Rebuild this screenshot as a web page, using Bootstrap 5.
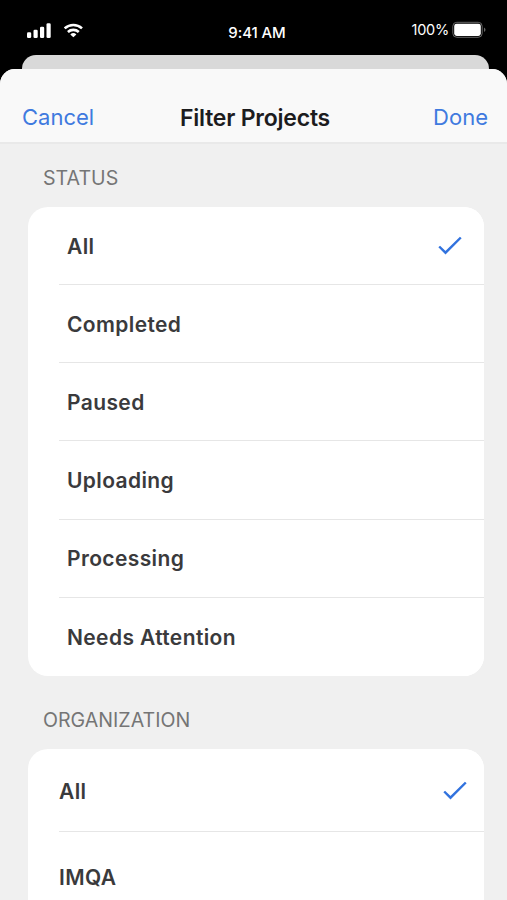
<!DOCTYPE html>
<html lang="en">
<head>
<meta charset="utf-8">
<meta name="viewport" content="width=device-width, initial-scale=1">
<title>Filter Projects</title>
<link href="https://cdn.jsdelivr.net/npm/bootstrap@5.3.0/dist/css/bootstrap.min.css" rel="stylesheet">
<style>
  body { font-family: Inter, "Liberation Sans", sans-serif; background: #000; height: 900px; line-height: 1; }
  .phone { width: 507px; height: 900px; background: #000; }
  .status-bar { height: 55px; font-size: 15px; flex: none; padding: 0 21px 0 26px; }
  .status-side { width: 180px; }
  .status-left { padding-top: 5px; gap: 12px; width: 182px; }
  .clock { font-weight: 500; letter-spacing: -.1px; padding-top: 9px; }
  .charge { padding-top: 4px; gap: 3px; font-size: 14.5px; }
  .charge span { letter-spacing: -.25px; padding-top: 2px; }
  .back-sheet { height: 14px; margin: 0 18px 0 22px; background: #d9d9d9; border-radius: 14px 14px 0 0; flex: none; }
  .sheet { background: #f0f0f0; border-radius: 15px 15px 0 0; }
  .sheet-head { height: 75px; background: #f9f9f9; border-bottom: 2px solid #e9e9e9; padding: 23px 19px 0 22px; font-size: 22px; flex: none; }
  .head-btn { color: #3f7adf; font-size: 22px; line-height: 1; background: none; width: 76px; }
  .sheet-title { font-size: 23px; font-weight: 600; color: #1c1c1e; margin: 0; letter-spacing: -.22px; padding-top: 3px; }
  .section-label { font-size: 19.6px; color: #757575; font-weight: 400; margin: 0; padding-left: 43px; flex: none; }
  .label-status { height: 63px; padding-top: 6px; }
  .label-org { height: 73px; padding-top: 16px; }
  .options { margin: 0 23px 0 28px; border-radius: 20px; background: #fff; overflow: hidden; flex: none; --bs-list-group-bg: #fff; }
  .options .option { height: 78.17px; margin-left: 31px; padding: 1.3px 22px 0 8px; border: 0; border-bottom: 1.5px solid #e6e6e6; font-size: 21px; font-weight: 600; color: #3a3a3c; letter-spacing: .38px; border-radius: 0; }
  .options .option:last-child { border-bottom: 0; }
  .options-org { height: 200px; }
  .options-org .option { height: 83.5px; padding: 2px 17px 0 0; }
  .options-org .option:last-child { height: 88px; }
</style>
<script src="https://cdn.jsdelivr.net/npm/bootstrap@5.3.0/dist/js/bootstrap.bundle.min.js"></script>
</head>
<body class="m-0 overflow-hidden">
<div class="phone d-flex flex-column overflow-hidden">
  <div class="status-bar d-flex justify-content-between align-items-center text-white">
    <div class="status-side status-left d-flex align-items-center">
      <svg width="26" height="17" viewBox="0 0 26 17" fill="#fff">
        <rect x="1" y="10.3" width="4.2" height="5.7" rx="1.3"/>
        <rect x="7.5" y="7.8" width="4.2" height="8.2" rx="1.3"/>
        <rect x="14" y="4.8" width="4.2" height="11.2" rx="1.3"/>
        <rect x="20.5" y="1.2" width="4.2" height="14.8" rx="1.3"/>
      </svg>
      <svg width="20" height="17" viewBox="0 0 20 17" fill="none" stroke="#fff" stroke-width="2.6">
        <path d="M.7 6.4a12.9 12.9 0 0 1 17.3 0"/>
        <path d="M3.9 10a8 8 0 0 1 10.9 0"/>
        <path d="M9.35 15.2L6.3 12.5a4.4 4.4 0 0 1 6.1 0z" fill="#fff" stroke="none"/>
      </svg>
    </div>
    <div class="clock">9:41 AM</div>
    <div class="status-side d-flex align-items-center justify-content-end charge">
      <span>100%</span>
      <svg width="34" height="18" viewBox="0 0 34 18"><rect x=".8" y="1.3" width="29.4" height="15" rx="4" fill="none" stroke="#666"/><rect x="2.2" y="2.7" width="26.6" height="12.2" rx="2.4" fill="#fff"/><path d="M32 6.5v4.5q1.5-.6 1.5-2.2T32 6.5" fill="#666"/></svg>
    </div>
  </div>
  <div class="back-sheet"></div>
  <main class="sheet d-flex flex-column flex-grow-1 overflow-hidden">
    <header class="sheet-head d-flex justify-content-between align-items-center">
      <button class="head-btn border-0 p-0 text-start" type="button">Cancel</button>
      <h1 class="sheet-title">Filter Projects</h1>
      <button class="head-btn border-0 p-0 text-end" type="button">Done</button>
    </header>
    <h2 class="section-label label-status d-flex align-items-center">STATUS</h2>
    <ul class="options list-group">
      <li class="option list-group-item d-flex align-items-center justify-content-between">All
        <svg width="24" height="20" viewBox="0 0 24 20" fill="none" stroke="#3172de" stroke-width="2.4"><path d="M1.2 10.5l6.3 6.2L22.8 1.5"/></svg></li>
      <li class="option list-group-item d-flex align-items-center">Completed</li>
      <li class="option list-group-item d-flex align-items-center">Paused</li>
      <li class="option list-group-item d-flex align-items-center">Uploading</li>
      <li class="option list-group-item d-flex align-items-center">Processing</li>
      <li class="option list-group-item d-flex align-items-center">Needs Attention</li>
    </ul>
    <h2 class="section-label label-org d-flex align-items-center">ORGANIZATION</h2>
    <ul class="options options-org list-group">
      <li class="option list-group-item d-flex align-items-center justify-content-between">All
        <svg width="24" height="20" viewBox="0 0 24 20" fill="none" stroke="#3172de" stroke-width="2.4"><path d="M1.2 10.5l6.3 6.2L22.8 1.5"/></svg></li>
      <li class="option list-group-item d-flex align-items-center">IMQA</li>
    </ul>
  </main>
</div>
</body>
</html>
